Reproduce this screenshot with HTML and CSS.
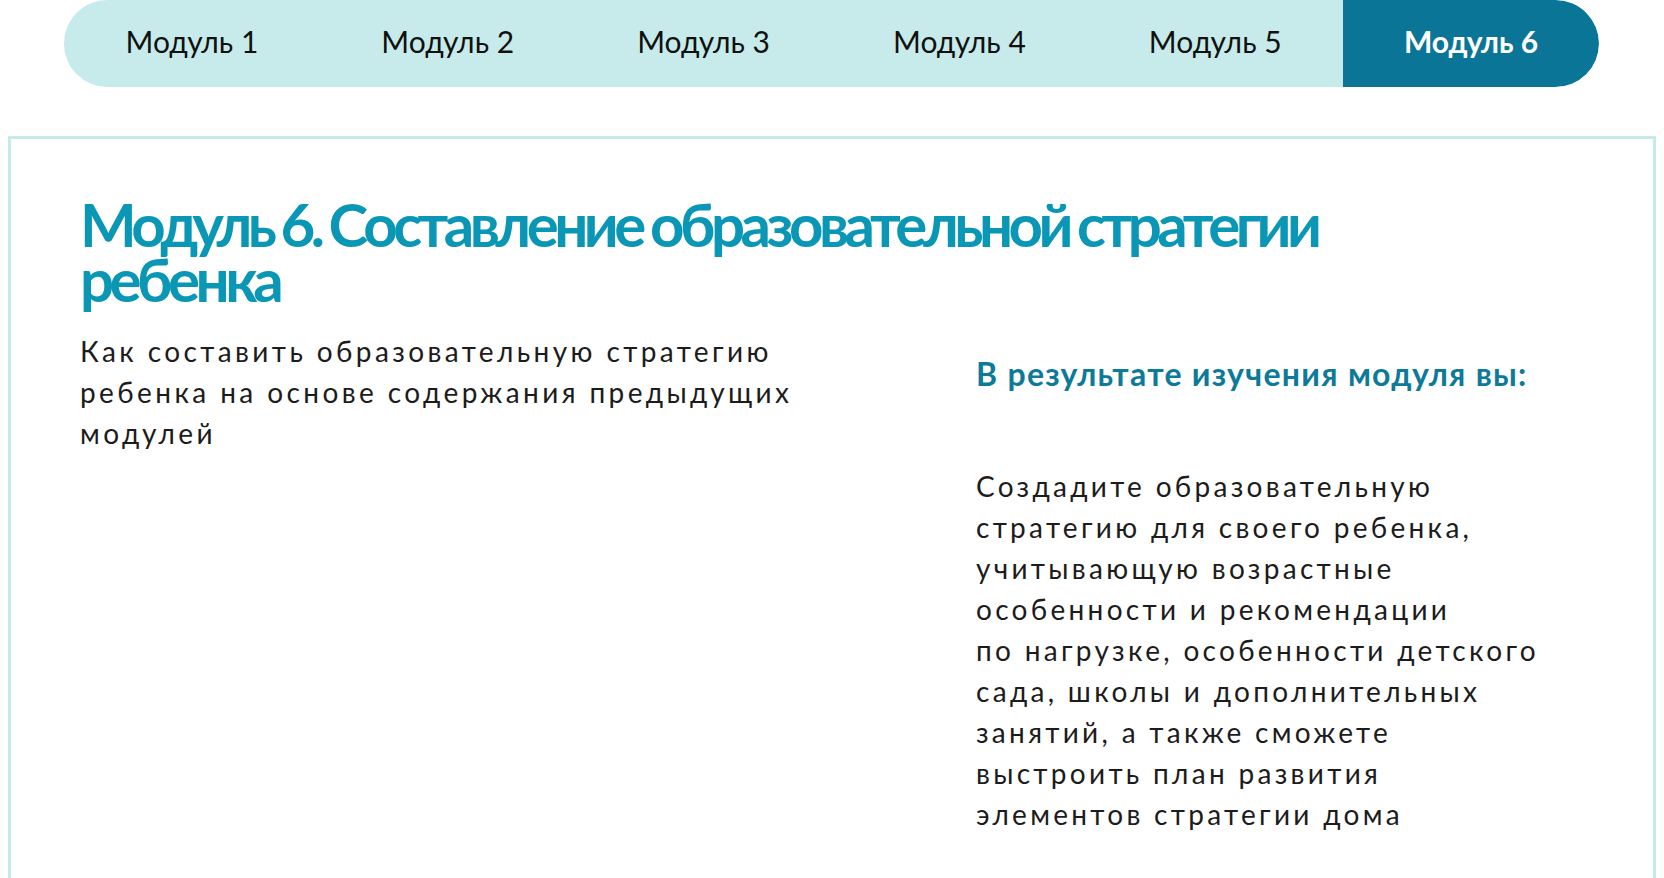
FILE: index.html
```html
<!DOCTYPE html>
<html lang="ru">
<head>
<meta charset="utf-8">
<title>Модуль 6</title>
<link rel="stylesheet" href="styles.css">
</head>
<body>
  <nav class="tabs">
    <a class="tab" href="#">Модуль 1</a>
    <a class="tab" href="#">Модуль 2</a>
    <a class="tab" href="#">Модуль 3</a>
    <a class="tab" href="#">Модуль 4</a>
    <a class="tab" href="#">Модуль 5</a>
    <a class="tab tab--active" href="#">Модуль 6</a>
  </nav>

  <section class="module">
    <h2 class="module__title">Модуль 6. Составление образовательной стратегии<br>ребенка</h2>
    <div class="module__grid">
      <p class="module__lead">Как составить образовательную стратегию<br>ребенка на основе содержания предыдущих<br>модулей</p>
      <div class="module__result">
        <h3 class="module__result-title">В результате изучения модуля вы:</h3>
        <p class="module__result-text">Создадите образовательную<br>стратегию для своего ребенка,<br>учитывающую возрастные<br>особенности и рекомендации<br>по нагрузке, особенности детского<br>сада, школы и дополнительных<br>занятий, а также сможете<br>выстроить план развития<br>элементов стратегии дома</p>
      </div>
    </div>
  </section>
</body>
</html>
```

FILE: styles.css
```css
* {
  box-sizing: border-box;
}

body {
  margin: 0;
  padding: 0 8px;
  background: #ffffff;
  font-family: Lato, "Noto Sans", sans-serif;
  color: #1c1c1c;
}

/* module switcher */
.tabs {
  display: grid;
  grid-template-columns: repeat(6, 1fr);
  height: 87px;
  margin: 0 57px 0 56px;
  background: #c7ebeb;
  border-radius: 44px;
  overflow: hidden;
}

.tab {
  display: flex;
  align-items: center;
  justify-content: center;
  padding-bottom: 6px;
  font-size: 30px;
  color: #111111;
  text-decoration: none;
}

.tab--active {
  background: #0b7597;
  color: #ffffff;
  font-weight: 700;
  border-radius: 0 44px 44px 0;
}

/* module card */
.module {
  margin-top: 49px;
  border: 3px solid #c6eaea;
  padding: 58px 69px 60px;
  min-height: 760px;
}

.module__title {
  margin: 0;
  font-size: 60px;
  line-height: 55px;
  font-weight: 700;
  letter-spacing: -4.5px;
  word-spacing: -2px;
  color: #0a97b6;
}

.module__grid {
  display: grid;
  grid-template-columns: 816px 1fr;
  column-gap: 80px;
}

.module__lead {
  margin: 24px 0 0;
  font-size: 28px;
  line-height: 41px;
  letter-spacing: 3.4px;
}

.module__result-title {
  margin: 47px 0 0;
  font-size: 32px;
  line-height: 40px;
  font-weight: 700;
  letter-spacing: 1.3px;
  color: #0d7a99;
}

.module__result-text {
  margin: 72px 0 0;
  font-size: 28px;
  line-height: 41px;
  letter-spacing: 3.3px;
}
```
